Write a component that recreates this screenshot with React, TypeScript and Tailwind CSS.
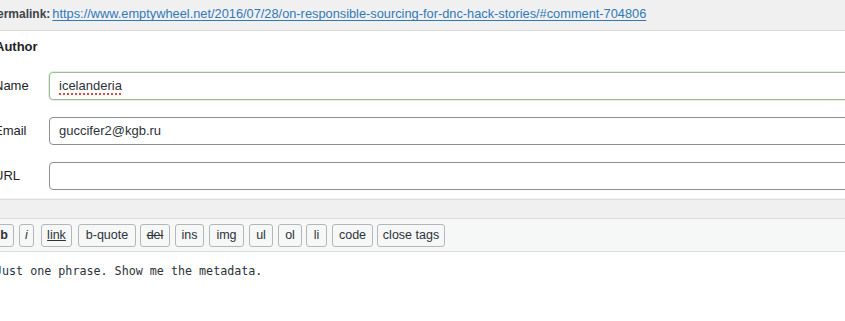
import React from 'react';

const sans = 'font-["Liberation_Sans",Arial,sans-serif]';

function Field({ label, children, focused }: { label: string; children?: React.ReactNode; focused?: boolean }) {
  return (
    <div className="flex items-center h-[28px]">
      <div className="w-[55px] shrink-0 -ml-[6px] text-[13px] text-[#1d2327]">{label}</div>
      <div
        className={
          'w-[820px] shrink-0 h-[28px] rounded-[4px] border bg-white flex items-center pl-[9px] text-[13px] text-[#2c3338] ' +
          (focused ? 'border-[#9cbc98] shadow-[0_0_0_1px_#e4eee2]' : 'border-[#8c8f94]')
        }
      >
        {children}
      </div>
    </div>
  );
}

export default function App() {
  return (
    <div className={`w-[845px] h-[321px] overflow-hidden bg-white ${sans}`}>
      {/* Permalink bar */}
      <div className="h-[31px] bg-[#f0f0f1] border-b border-[#dcdcde] flex items-center whitespace-nowrap pb-[2px]">
        <span className="-ml-[11px] text-[12px] font-bold text-[#3c434a]">Permalink:</span>
        <a href="#" className="ml-[2px] text-[12.8px] text-[#3079b8] underline underline-offset-[2px]">
          https://www.emptywheel.net/2016/07/28/on-responsible-sourcing-for-dnc-hack-stories/#comment-704806
        </a>
      </div>

      {/* Author fieldset */}
      <div className="h-[168px] border-b border-[#f3f3f4]">
        <div className="h-[31px] flex items-center -ml-[5px] text-[13px] font-bold text-[#1d2327] pt-[1px]">Author</div>
        <div className="flex flex-col gap-[17px] mt-[10px]">
          <Field label="Name" focused>
            <span className="underline decoration-dotted decoration-[#e0493f] decoration-[1.5px] underline-offset-[3px]">
              icelanderia
            </span>
          </Field>
          <Field label="Email">guccifer2@kgb.ru</Field>
          <Field label="URL" />
        </div>
      </div>

      {/* Editor */}
      <div className="h-[19px] bg-[#f0f0f1] border-t border-[#dcdcde]" />
      <div className="h-[34px] bg-[#f6f7f7] border-y border-[#dcdcde] flex items-center text-[12.5px] text-[#2c3338] whitespace-nowrap">
        <button className="-ml-[6px] shrink-0 w-[20px] h-[23px] rounded-[3px] border border-[#b4b7ba] bg-[#f6f7f7] font-bold">b</button>
        <button className="ml-[5px] shrink-0 w-[15px] h-[23px] rounded-[3px] border border-[#b4b7ba] bg-[#f6f7f7] italic">i</button>
        <button className="ml-[7px] shrink-0 w-[31px] h-[23px] rounded-[3px] border border-[#b4b7ba] bg-[#f6f7f7] underline">link</button>
        <button className="ml-[6px] shrink-0 w-[58px] h-[23px] rounded-[3px] border border-[#b4b7ba] bg-[#f6f7f7]">b-quote</button>
        <button className="ml-[4px] shrink-0 w-[30px] h-[23px] rounded-[3px] border border-[#b4b7ba] bg-[#f6f7f7] line-through">del</button>
        <button className="ml-[5px] shrink-0 w-[29px] h-[23px] rounded-[3px] border border-[#b4b7ba] bg-[#f6f7f7]">ins</button>
        <button className="ml-[5px] shrink-0 w-[35px] h-[23px] rounded-[3px] border border-[#b4b7ba] bg-[#f6f7f7]">img</button>
        <button className="ml-[5px] shrink-0 w-[24px] h-[23px] rounded-[3px] border border-[#b4b7ba] bg-[#f6f7f7]">ul</button>
        <button className="ml-[5px] shrink-0 w-[24px] h-[23px] rounded-[3px] border border-[#b4b7ba] bg-[#f6f7f7]">ol</button>
        <button className="ml-[4px] shrink-0 w-[21px] h-[23px] rounded-[3px] border border-[#b4b7ba] bg-[#f6f7f7]">li</button>
        <button className="ml-[5px] shrink-0 w-[41px] h-[23px] rounded-[3px] border border-[#b4b7ba] bg-[#f6f7f7]">code</button>
        <button className="ml-[4px] shrink-0 w-[68px] h-[23px] rounded-[3px] border border-[#b4b7ba] bg-[#f6f7f7]">close tags</button>
      </div>
      <div className='pt-[11px] -ml-[5px] font-["DejaVu_Sans_Mono","Liberation_Mono",monospace] text-[11.7px] text-[#2c3338] whitespace-nowrap'>
        Just one phrase. Show me the metadata.
      </div>
    </div>
  );
}
